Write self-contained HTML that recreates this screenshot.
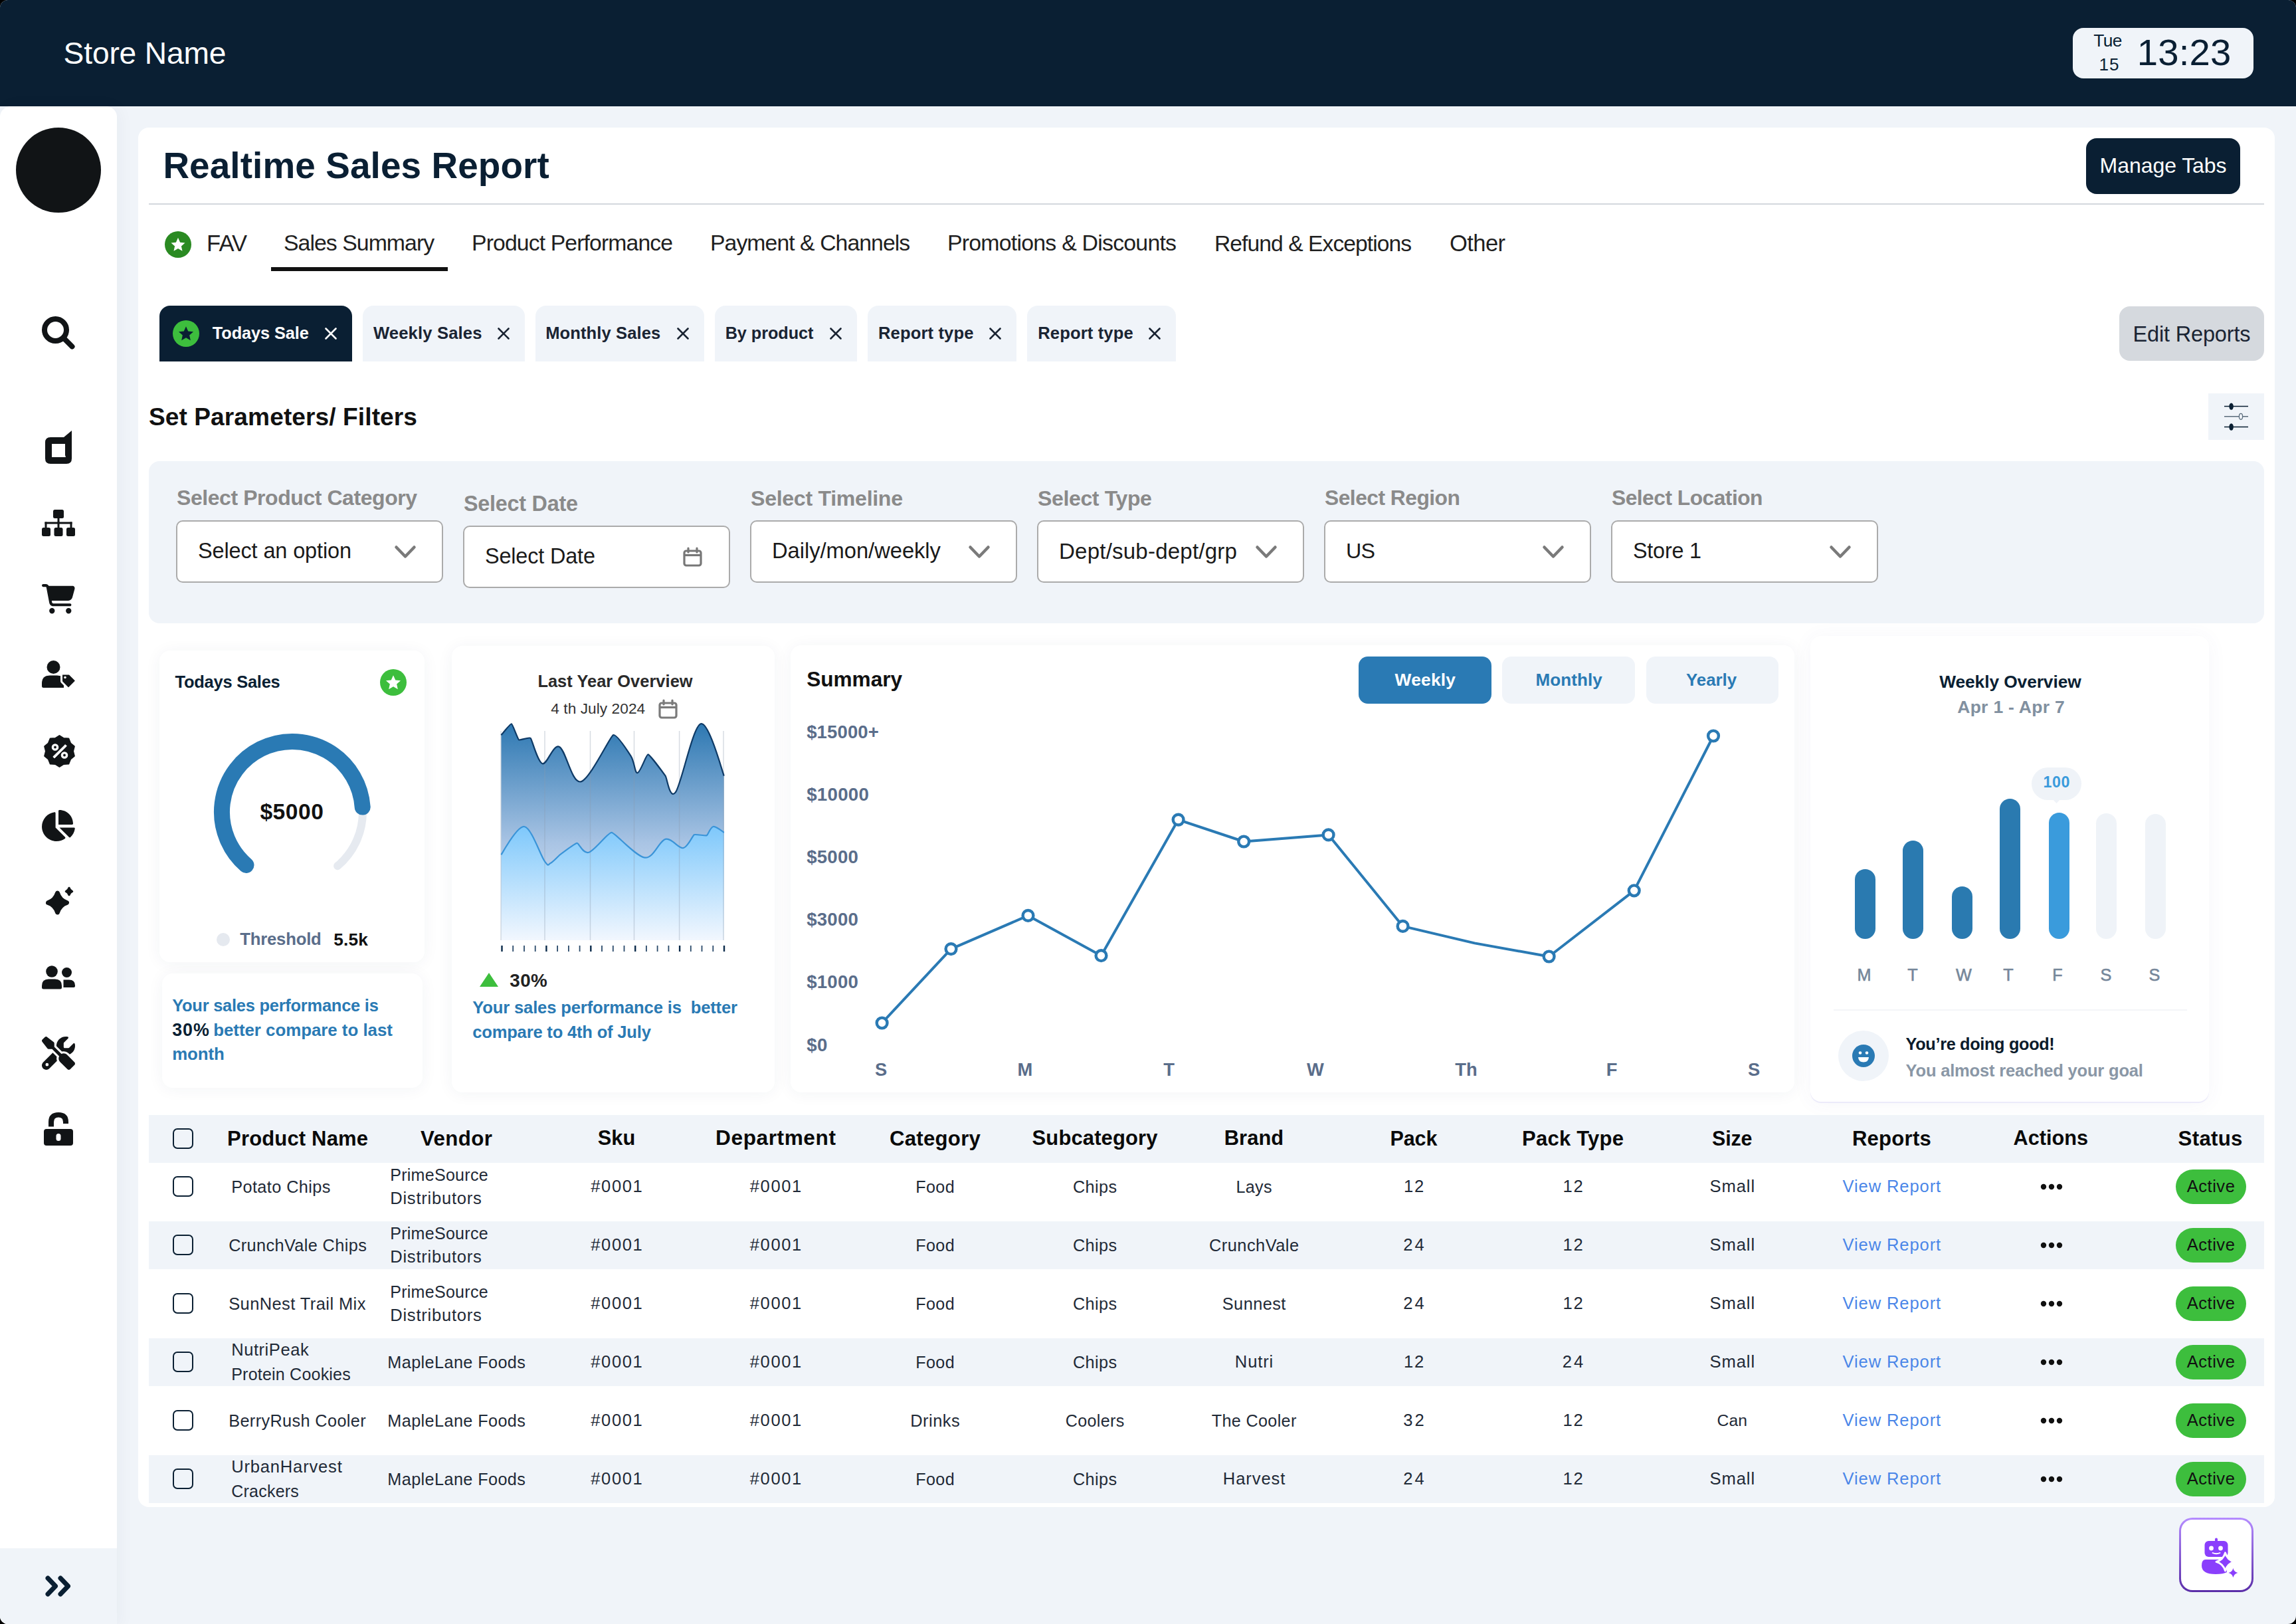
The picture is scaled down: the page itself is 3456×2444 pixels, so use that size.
<!DOCTYPE html><html><head><meta charset="utf-8"><style>
html,body{margin:0;padding:0;background:#000;}
#root{position:relative;width:3456px;height:2444px;overflow:hidden;border-radius:12px;background:#F0F4F9;font-family:"Liberation Sans",sans-serif;}
#root div.t{position:absolute;white-space:pre;line-height:1;}
</style></head><body><div id="root">
<div style="position:absolute;left:0px;top:0px;width:3456px;height:160px;background:#0A1F33;border-radius:0px;"></div>
<div class="t" style="top:56.9px;font-size:46.17px;font-weight:400;color:#FFFFFF;letter-spacing:-0.16px;left:95.6px;">Store Name</div>
<div style="position:absolute;left:3120px;top:42px;width:272px;height:76px;background:#F0F4F9;border-radius:16px;"></div>
<div class="t" style="top:48.4px;font-size:26.34px;font-weight:400;color:#0A1F33;letter-spacing:-0.59px;left:3151.2px;">Tue</div>
<div class="t" style="top:83.7px;font-size:26.10px;font-weight:400;color:#0A1F33;letter-spacing:0.79px;left:3159.6px;">15</div>
<div class="t" style="top:51.2px;font-size:56.26px;font-weight:400;color:#0A1F33;letter-spacing:0.15px;left:3216.8px;">13:23</div>
<div style="position:absolute;left:0px;top:160px;width:176px;height:2290px;background:#FFFFFF;border-radius:16px 16px 0 0;box-shadow:4px 0 24px rgba(20,40,80,0.04);"></div>
<div style="position:absolute;left:0px;top:2330px;width:176px;height:120px;background:#F0F4F9;border-radius:0px;"></div>
<div style="position:absolute;left:24px;top:192px;width:128px;height:128px;background:#111416;border-radius:64px;"></div>
<svg style="position:absolute;left:63px;top:476px;overflow:visible;" width="50" height="51" viewBox="0 0 50 51"><circle cx="20.5" cy="20.5" r="16.5" fill="none" stroke="#111416" stroke-width="8"/><line x1="33" y1="33" x2="45.5" y2="45.5" stroke="#111416" stroke-width="8" stroke-linecap="round"/></svg>
<svg style="position:absolute;left:68px;top:648px;overflow:visible;" width="40" height="50" viewBox="0 0 40 50"><path fill="#111416" fill-rule="evenodd" d="M8 10 H28 L40 0 V42 Q40 50 32 50 H8 Q0 50 0 42 V18 Q0 10 8 10 Z M10 20 V40 H31 L30 37 V20 Z"/></svg>
<svg style="position:absolute;left:63px;top:767px;overflow:visible;" width="50" height="40" viewBox="0 0 50 40"><g fill="#111416"><rect x="17" y="0" width="16" height="13" rx="2.5"/><rect x="23.5" y="12" width="3" height="9"/><rect x="4.5" y="18.5" width="41" height="3"/><rect x="4.5" y="18.5" width="3" height="9"/><rect x="23.5" y="18.5" width="3" height="9"/><rect x="42.5" y="18.5" width="3" height="9"/><rect x="0" y="27" width="13" height="13" rx="2.5"/><rect x="18.5" y="27" width="13" height="13" rx="2.5"/><rect x="37" y="27" width="13" height="13" rx="2.5"/></g></svg>
<svg style="position:absolute;left:63px;top:879px;overflow:visible;" width="50" height="44.4" viewBox="0 0 576 512"><path fill="#111416" d="M0 24C0 10.7 10.7 0 24 0H69.5c22 0 41.5 12.8 50.6 32h411c26.3 0 45.5 25 38.6 50.4l-41 152.3c-8.5 31.4-37 53.3-69.5 53.3H170.7l5.4 28.5c2.2 11.3 12.1 19.5 23.6 19.5H488c13.300 0 24 10.7 24 24s-10.7 24-24 24H199.7c-34.6 0-64.3-24.6-70.7-58.5L77.4 54.5c-.7-3.8-4-6.5-7.9-6.5H24C10.7 48 0 37.3 0 24zM128 464a48 48 0 1 1 96 0 48 48 0 1 1 -96 0zm336-48a48 48 0 1 1 0 96 48 48 0 1 1 0-96z"/></svg>
<svg style="position:absolute;left:63px;top:994px;overflow:visible;" width="50" height="41" viewBox="0 0 50 41"><g fill="#111416"><circle cx="17.5" cy="10" r="10"/><path d="M12 22.5 H23 Q33 22.5 33 32 V41 H2.5 Q0 41 0 38.5 V34.5 Q0 22.5 12 22.5 Z"/><path d="M30.5 20 H40.5 Q41.5 20 42.3 20.8 L50.5 29 Q52 30.5 50.5 32 L41.5 41 Q40 42.5 38.5 41 L30.3 32.8 Q29.5 32 29.5 31 V21 Q29.5 20 30.5 20 Z" stroke="#fff" stroke-width="3"/><circle cx="35" cy="25.5" r="1.8" fill="#fff"/></g></svg>
<svg style="position:absolute;left:65px;top:1105.5px;overflow:visible;" width="49" height="49" viewBox="0 0 49 49"><polygon fill="#111416" stroke="#111416" stroke-width="1.8" stroke-linejoin="round" points="24.50,0.90 30.87,4.91 38.37,5.41 41.17,12.39 46.94,17.21 45.10,24.50 46.94,31.79 41.17,36.61 38.37,43.59 30.87,44.09 24.50,48.10 18.13,44.09 10.63,43.59 7.83,36.61 2.06,31.79 3.90,24.50 2.06,17.21 7.83,12.39 10.63,5.41 18.13,4.91"/><g fill="none" stroke="#fff" stroke-width="3.4"><circle cx="18" cy="18.5" r="3.6"/><circle cx="32" cy="30.5" r="3.6"/></g><path d="M33.2 14.6 L35.4 16.8 L17 35 L14.8 32.8 Z" fill="#fff" stroke="#fff" stroke-width="1"/></svg>
<svg style="position:absolute;left:63px;top:1219px;overflow:visible;" width="50" height="47" viewBox="32 0 544 512"><path fill="#111416" d="M304 240V16.6c0-9 7-16.6 16-16.6C443.7 0 544 100.3 544 224c0 9-7.6 16-16.6 16H304zM32 272C32 150.7 122.1 50.3 239 34.3c9.2-1.3 17 6.1 17 15.4V288L412.5 444.5c6.7 6.7 6.2 17.7-1.5 23.1C371.8 495.6 323.8 512 272 512C139.5 512 32 404.6 32 272zm526.4 16c9.3 0 16.6 7.8 15.4 17c-7.7 55.9-34.6 105.6-73.9 142.3c-6 5.6-15.4 5.2-21.2-.7L320 288H558.4z"/></svg>
<svg style="position:absolute;left:67px;top:1335px;overflow:visible;" width="43" height="41" viewBox="0 0 43 41"><g fill="#111416" stroke="#111416" stroke-linejoin="round"><path d="M19.5 9 Q23 20 33.5 23.5 Q23 27 19.5 38 Q16 27 5.5 23.5 Q16 20 19.5 9 Z" stroke-width="7"/><path d="M37 1.5 Q38.3 5.2 41.5 6.5 Q38.3 7.8 37 11.5 Q35.7 7.8 32.5 6.5 Q35.7 5.2 37 1.5 Z" stroke-width="3.5"/></g></svg>
<svg style="position:absolute;left:63px;top:1453px;overflow:visible;" width="50" height="36" viewBox="0 0 50 36"><g fill="#111416"><circle cx="15" cy="9" r="8.8"/><path d="M10 20.5 H20 Q30 20.5 30 30.5 V33 Q30 35.5 27.5 35.5 H2.5 Q0 35.5 0 33 V30.5 Q0 20.5 10 20.5 Z"/><circle cx="37.5" cy="10.5" r="7.5"/><path d="M32.5 21.5 H41 Q50 21.5 50 30 V31 Q50 33 48 33 H32.5 Z"/></g></svg>
<svg style="position:absolute;left:63px;top:1560px;overflow:visible;" width="50" height="50" viewBox="0 0 512 512"><path fill="#111416" d="M78.6 5C69.1-2.4 55.6-1.5 47 7L7 47c-8.5 8.5-9.4 22-2.1 31.6l80 104c4.5 5.9 11.6 9.4 19 9.4h54.1l109 109c-14.7 29-10 65.4 14.3 89.6l112 112c12.5 12.5 32.8 12.5 45.3 0l64-64c12.5-12.5 12.5-32.8 0-45.3l-112-112c-24.2-24.2-60.6-29-89.6-14.3l-109-109V104c0-7.5-3.5-14.5-9.4-19L78.6 5zM19.9 396.1C7.2 408.8 0 426.1 0 444.1C0 481.6 30.4 512 67.9 512c18 0 35.3-7.2 48-19.9L233.7 374.3c-7.8-20.9-9-43.6-3.6-65.1l-61.7-61.7L19.9 396.1zM512 144c0-10.5-1.1-20.7-3.1-30.5c-2.4-11.2-16.1-14.1-24.2-6l-63.9 63.9c-3 3-7.1 4.7-11.3 4.7H352c-8.8 0-16-7.200-16-16V102.6c0-4.2 1.7-8.3 4.7-11.3l63.9-63.9c8.1-8.1 5.2-21.8-6-24.2C388.7 1.1 378.5 0 368 0C288.5 0 224 64.5 224 144l0 .8 85.3 85.3c36-9.1 75.8 .5 104 28.7L429 274.5c49-23 83-72.8 83-130.5zM56 432a24 24 0 1 1 48 0 24 24 0 1 1 -48 0z"/></svg>
<svg style="position:absolute;left:66px;top:1674px;overflow:visible;" width="44" height="50" viewBox="0 0 44 50"><g fill="#111416"><path d="M7 21.5 V14.5 Q7 0 22 0 Q37 0 37 14.5 V17 H29 V14.5 Q29 7.5 22 7.5 Q15 7.5 15 14.5 V21.5 Z"/><rect x="0" y="25" width="44" height="25" rx="4"/></g><rect x="18.5" y="32" width="7" height="11" rx="3.5" fill="#fff"/></svg>
<svg style="position:absolute;left:68px;top:2371px;overflow:visible;" width="40" height="32" viewBox="0 0 40 32"><g fill="none" stroke="#0A1F33" stroke-width="7" stroke-linecap="round" stroke-linejoin="round"><path d="M4 4 L15.5 16 L4 28"/><path d="M23 4 L34.5 16 L23 28"/></g></svg>
<div style="position:absolute;left:208px;top:192px;width:3216px;height:2076px;background:#FFFFFF;border-radius:16px;"></div>
<div class="t" style="top:222.1px;font-size:54.85px;font-weight:700;color:#0A1F33;letter-spacing:0.11px;left:245.4px;">Realtime Sales Report</div>
<div style="position:absolute;left:3140px;top:208px;width:232px;height:84px;background:#0A1F33;border-radius:16px;"></div>
<div class="t" style="top:233.3px;font-size:32.01px;font-weight:400;color:#FFFFFF;letter-spacing:-0.06px;left:3160.6px;">Manage Tabs</div>
<div style="position:absolute;left:224px;top:306px;width:3184px;height:2px;background:#D3D8DD;border-radius:0px;"></div>
<svg style="position:absolute;left:248px;top:348px;overflow:visible;" width="40" height="40" viewBox="0 0 40 40"><circle cx="20" cy="20" r="20" fill="#2A8A22"/><g transform="translate(20 20.8)"><path fill="#fff" d="M0 -11 L3.1 -4 L10.5 -3.4 L4.9 1.6 L6.5 9 L0 5.1 L-6.5 9 L-4.9 1.6 L-10.5 -3.4 L-3.1 -4 Z"/></g></svg>
<div class="t" style="top:348.7px;font-size:34.59px;font-weight:400;color:#1F1F1F;letter-spacing:-0.83px;left:311.0px;">FAV</div>
<div class="t" style="top:349.4px;font-size:33.82px;font-weight:400;color:#1F1F1F;letter-spacing:-0.96px;left:427.0px;">Sales Summary</div>
<div style="position:absolute;left:408px;top:402px;width:266px;height:6px;background:#111111;border-radius:0px;"></div>
<div class="t" style="top:349.4px;font-size:33.76px;font-weight:400;color:#1F1F1F;letter-spacing:-0.88px;left:710.0px;">Product Performance</div>
<div class="t" style="top:349.4px;font-size:33.75px;font-weight:400;color:#1F1F1F;letter-spacing:-0.93px;left:1069.0px;">Payment &amp; Channels</div>
<div class="t" style="top:349.3px;font-size:33.90px;font-weight:400;color:#1F1F1F;letter-spacing:-0.79px;left:1426.0px;">Promotions &amp; Discounts</div>
<div class="t" style="top:349.5px;font-size:33.62px;font-weight:400;color:#1F1F1F;letter-spacing:-0.93px;left:1828.0px;">Refund &amp; Exceptions</div>
<div class="t" style="top:348.7px;font-size:34.57px;font-weight:400;color:#1F1F1F;letter-spacing:-0.58px;left:2182.0px;">Other</div>
<div style="position:absolute;left:240px;top:460px;width:290px;height:84px;background:#0A1F33;border-radius:16px 16px 0 0;"></div>
<svg style="position:absolute;left:260px;top:482px;overflow:visible;" width="40" height="40" viewBox="0 0 40 40"><circle cx="20" cy="20" r="20" fill="#3DBE3D"/><g transform="translate(20 20.8) scale(1.05)"><path fill="#0A1F33" d="M0 -11 L3.1 -4 L10.5 -3.4 L4.9 1.6 L6.5 9 L0 5.1 L-6.5 9 L-4.9 1.6 L-10.5 -3.4 L-3.1 -4 Z"/></g></svg>
<div class="t" style="top:488.9px;font-size:25.29px;font-weight:700;color:#FFFFFF;letter-spacing:-0.07px;left:319.8px;">Todays Sale</div>
<svg style="position:absolute;left:489px;top:493px;overflow:visible;" width="18" height="18" viewBox="0 0 18 18"><path d="M1.5 1.5 L16.5 16.5 M16.5 1.5 L1.5 16.5" stroke="#FFFFFF" stroke-width="2.6" stroke-linecap="round"/></svg>
<div style="position:absolute;left:546px;top:460px;width:244px;height:84px;background:#F0F4F9;border-radius:16px 16px 0 0;"></div>
<div class="t" style="top:488.6px;font-size:25.65px;font-weight:700;color:#1A2433;letter-spacing:0.14px;left:561.9px;">Weekly Sales</div>
<svg style="position:absolute;left:749px;top:493px;overflow:visible;" width="18" height="18" viewBox="0 0 18 18"><path d="M1.5 1.5 L16.5 16.5 M16.5 1.5 L1.5 16.5" stroke="#1A2433" stroke-width="2.6" stroke-linecap="round"/></svg>
<div style="position:absolute;left:806px;top:460px;width:254px;height:84px;background:#F0F4F9;border-radius:16px 16px 0 0;"></div>
<div class="t" style="top:488.7px;font-size:25.58px;font-weight:700;color:#1A2433;letter-spacing:0.09px;left:821.2px;">Monthly Sales</div>
<svg style="position:absolute;left:1019px;top:493px;overflow:visible;" width="18" height="18" viewBox="0 0 18 18"><path d="M1.5 1.5 L16.5 16.5 M16.5 1.5 L1.5 16.5" stroke="#1A2433" stroke-width="2.6" stroke-linecap="round"/></svg>
<div style="position:absolute;left:1076px;top:460px;width:214px;height:84px;background:#F0F4F9;border-radius:16px 16px 0 0;"></div>
<div class="t" style="top:488.9px;font-size:25.29px;font-weight:700;color:#1A2433;letter-spacing:-0.07px;left:1091.7px;">By product</div>
<svg style="position:absolute;left:1249px;top:493px;overflow:visible;" width="18" height="18" viewBox="0 0 18 18"><path d="M1.5 1.5 L16.5 16.5 M16.5 1.5 L1.5 16.5" stroke="#1A2433" stroke-width="2.6" stroke-linecap="round"/></svg>
<div style="position:absolute;left:1306px;top:460px;width:224px;height:84px;background:#F0F4F9;border-radius:16px 16px 0 0;"></div>
<div class="t" style="top:488.6px;font-size:25.62px;font-weight:700;color:#1A2433;letter-spacing:0.12px;left:1322.0px;">Report type</div>
<svg style="position:absolute;left:1489px;top:493px;overflow:visible;" width="18" height="18" viewBox="0 0 18 18"><path d="M1.5 1.5 L16.5 16.5 M16.5 1.5 L1.5 16.5" stroke="#1A2433" stroke-width="2.6" stroke-linecap="round"/></svg>
<div style="position:absolute;left:1546px;top:460px;width:224px;height:84px;background:#F0F4F9;border-radius:16px 16px 0 0;"></div>
<div class="t" style="top:488.6px;font-size:25.62px;font-weight:700;color:#1A2433;letter-spacing:0.12px;left:1562.2px;">Report type</div>
<svg style="position:absolute;left:1729px;top:493px;overflow:visible;" width="18" height="18" viewBox="0 0 18 18"><path d="M1.5 1.5 L16.5 16.5 M16.5 1.5 L1.5 16.5" stroke="#1A2433" stroke-width="2.6" stroke-linecap="round"/></svg>
<div style="position:absolute;left:3190px;top:461px;width:218px;height:82px;background:#D5D9DE;border-radius:16px;"></div>
<div class="t" style="top:486.5px;font-size:32.48px;font-weight:400;color:#1A2433;letter-spacing:-0.15px;left:3210.5px;">Edit Reports</div>
<div class="t" style="top:608.6px;font-size:37.10px;font-weight:700;color:#111111;letter-spacing:0.10px;left:223.9px;">Set Parameters/ Filters</div>
<div style="position:absolute;left:3324px;top:592px;width:84px;height:70px;background:#F0F4F9;border-radius:0px;"></div>
<svg style="position:absolute;left:3347px;top:603px;overflow:visible;" width="40" height="46" viewBox="0 0 40 46"><g stroke="#0A1F33" stroke-width="1.5"><line x1="1" y1="8.6" x2="37" y2="8.6"/><line x1="1" y1="23.8" x2="37" y2="23.8" stroke="#5A6B7B"/><line x1="1" y1="39.5" x2="37" y2="39.5"/></g><ellipse cx="11.6" cy="8.6" rx="3.3" ry="5.2" fill="#0A1F33"/><ellipse cx="26" cy="23.8" rx="2.6" ry="4.5" fill="#F0F4F9" stroke="#5A6B7B" stroke-width="1.3"/><ellipse cx="11.6" cy="39.5" rx="3.3" ry="5.2" fill="#0A1F33"/></svg>
<div style="position:absolute;left:224px;top:694px;width:3184px;height:244px;background:#F0F4F9;border-radius:16px;"></div>
<div class="t" style="top:733.9px;font-size:31.97px;font-weight:700;color:#8A8A8A;letter-spacing:-0.42px;left:266.0px;">Select Product Category</div>
<div style="position:absolute;left:265px;top:783px;width:398px;height:90px;border:2px solid #ABABAB;border-radius:10px;background:#fff"></div>
<div class="t" style="top:813.1px;font-size:32.50px;font-weight:400;color:#1A1A1A;letter-spacing:-0.14px;left:298.0px;">Select an option</div>
<svg style="position:absolute;left:594px;top:821px;overflow:visible;" width="32" height="20" viewBox="0 0 32 20"><path d="M2.5 2.5 L16 16.5 L29.5 2.5" fill="none" stroke="#7A7A7A" stroke-width="4.5" stroke-linecap="round" stroke-linejoin="round"/></svg>
<div class="t" style="top:741.6px;font-size:32.34px;font-weight:700;color:#8A8A8A;letter-spacing:-0.24px;left:698.0px;">Select Date</div>
<div style="position:absolute;left:697px;top:791px;width:398px;height:90px;border:2px solid #ABABAB;border-radius:10px;background:#fff"></div>
<div class="t" style="top:821.1px;font-size:32.45px;font-weight:400;color:#1A1A1A;letter-spacing:-0.17px;left:730.0px;">Select Date</div>
<svg style="position:absolute;left:1028px;top:824px;overflow:visible;" width="29" height="29" viewBox="0 0 29 29"><g fill="none" stroke="#777" stroke-width="3.2"><rect x="2" y="5" width="25" height="22" rx="3"/><line x1="2" y1="11.5" x2="27" y2="11.5"/><line x1="8" y1="1" x2="8" y2="7" stroke-linecap="round"/><line x1="21" y1="1" x2="21" y2="7" stroke-linecap="round"/></g></svg>
<div class="t" style="top:733.8px;font-size:32.16px;font-weight:700;color:#8A8A8A;letter-spacing:-0.32px;left:1130.0px;">Select Timeline</div>
<div style="position:absolute;left:1129px;top:783px;width:398px;height:90px;border:2px solid #ABABAB;border-radius:10px;background:#fff"></div>
<div class="t" style="top:812.9px;font-size:32.72px;font-weight:400;color:#1A1A1A;letter-spacing:-0.04px;left:1162.0px;">Daily/mon/weekly</div>
<svg style="position:absolute;left:1458px;top:821px;overflow:visible;" width="32" height="20" viewBox="0 0 32 20"><path d="M2.5 2.5 L16 16.5 L29.5 2.5" fill="none" stroke="#7A7A7A" stroke-width="4.5" stroke-linecap="round" stroke-linejoin="round"/></svg>
<div class="t" style="top:733.9px;font-size:32.07px;font-weight:700;color:#8A8A8A;letter-spacing:-0.39px;left:1562.0px;">Select Type</div>
<div style="position:absolute;left:1561px;top:783px;width:398px;height:90px;border:2px solid #ABABAB;border-radius:10px;background:#fff"></div>
<div class="t" style="top:812.6px;font-size:33.14px;font-weight:400;color:#1A1A1A;letter-spacing:0.17px;left:1594.0px;">Dept/sub-dept/grp</div>
<svg style="position:absolute;left:1890px;top:821px;overflow:visible;" width="32" height="20" viewBox="0 0 32 20"><path d="M2.5 2.5 L16 16.5 L29.5 2.5" fill="none" stroke="#7A7A7A" stroke-width="4.5" stroke-linecap="round" stroke-linejoin="round"/></svg>
<div class="t" style="top:734.1px;font-size:31.81px;font-weight:700;color:#8A8A8A;letter-spacing:-0.53px;left:1994.0px;">Select Region</div>
<div style="position:absolute;left:1993px;top:783px;width:398px;height:90px;border:2px solid #ABABAB;border-radius:10px;background:#fff"></div>
<div class="t" style="top:813.3px;font-size:32.22px;font-weight:400;color:#1A1A1A;letter-spacing:-0.78px;left:2026.0px;">US</div>
<svg style="position:absolute;left:2322px;top:821px;overflow:visible;" width="32" height="20" viewBox="0 0 32 20"><path d="M2.5 2.5 L16 16.5 L29.5 2.5" fill="none" stroke="#7A7A7A" stroke-width="4.5" stroke-linecap="round" stroke-linejoin="round"/></svg>
<div class="t" style="top:734.1px;font-size:31.77px;font-weight:700;color:#8A8A8A;letter-spacing:-0.52px;left:2426.0px;">Select Location</div>
<div style="position:absolute;left:2425px;top:783px;width:398px;height:90px;border:2px solid #ABABAB;border-radius:10px;background:#fff"></div>
<div class="t" style="top:813.2px;font-size:32.36px;font-weight:400;color:#1A1A1A;letter-spacing:-0.23px;left:2458.0px;">Store 1</div>
<svg style="position:absolute;left:2754px;top:821px;overflow:visible;" width="32" height="20" viewBox="0 0 32 20"><path d="M2.5 2.5 L16 16.5 L29.5 2.5" fill="none" stroke="#7A7A7A" stroke-width="4.5" stroke-linecap="round" stroke-linejoin="round"/></svg>
<div style="position:absolute;left:240px;top:979px;width:399px;height:469px;background:#FFFFFF;border-radius:16px;box-shadow:0 2px 24px rgba(30,50,90,0.055);"></div>
<div class="t" style="top:1014.4px;font-size:25.49px;font-weight:700;color:#0A1F33;letter-spacing:-0.26px;left:263.6px;">Todays Sales</div>
<svg style="position:absolute;left:572px;top:1007px;overflow:visible;" width="40" height="40" viewBox="0 0 40 40"><circle cx="20" cy="20" r="20" fill="#3DBE3D"/><g transform="translate(20 20.8) scale(1.05)"><path fill="#fff" d="M0 -11 L3.1 -4 L10.5 -3.4 L4.9 1.6 L6.5 9 L0 5.1 L-6.5 9 L-4.9 1.6 L-10.5 -3.4 L-3.1 -4 Z"/></g></svg>
<svg style="position:absolute;left:310px;top:1092px;overflow:visible;" width="260" height="260" viewBox="0 0 260 260"><g transform="translate(130 130)"><path d="M105.7 -7.4 A106 106 0 0 1 68.1 81.2" fill="none" stroke="#E6EAF0" stroke-width="12" stroke-linecap="round"/><path d="M-69.5 80.0 A106 106 0 1 1 105.7 -7.4" fill="none" stroke="#2A7AB4" stroke-width="24" stroke-linecap="round"/></g></svg>
<div class="t" style="top:1204.6px;font-size:33.57px;font-weight:700;color:#111111;letter-spacing:0.56px;left:391.4px;">$5000</div>
<div style="position:absolute;left:326px;top:1404px;width:20px;height:20px;background:#E5E9EF;border-radius:10px;"></div>
<div class="t" style="top:1401.3px;font-size:25.67px;font-weight:700;color:#5A6D8A;letter-spacing:-0.18px;left:361.2px;">Threshold</div>
<div class="t" style="top:1400.8px;font-size:26.23px;font-weight:700;color:#111111;letter-spacing:0.18px;left:502.2px;">5.5k</div>
<div style="position:absolute;left:244px;top:1465px;width:392px;height:172px;background:#FFFFFF;border-radius:16px;box-shadow:0 2px 24px rgba(30,50,90,0.055);"></div>
<div class="t" style="top:1501.4px;font-size:25.48px;font-weight:700;color:#2A7AB4;letter-spacing:-0.25px;left:259.2px;">Your sales performance is</div>
<div class="t" style="top:1537.3px;font-size:26.85px;font-weight:700;color:#0A1F33;letter-spacing:0.92px;left:259.2px;">30%</div>
<div class="t" style="top:1538.1px;font-size:25.89px;font-weight:700;color:#2A7AB4;letter-spacing:-0.03px;left:321.2px;">better compare to last</div>
<div class="t" style="top:1574.1px;font-size:25.85px;font-weight:700;color:#2A7AB4;letter-spacing:-0.08px;left:259.2px;">month</div>
<div style="position:absolute;left:680px;top:972px;width:486px;height:672px;background:#FFFFFF;border-radius:16px;box-shadow:0 2px 24px rgba(30,50,90,0.055);"></div>
<div class="t" style="top:1012.5px;font-size:25.38px;font-weight:700;color:#2A2A2A;letter-spacing:0.05px;left:809.4px;">Last Year Overview</div>
<div class="t" style="top:1054.8px;font-size:22.67px;font-weight:400;color:#333333;letter-spacing:0.06px;left:829.3px;">4 th July 2024</div>
<svg style="position:absolute;left:991px;top:1053px;overflow:visible;" width="29" height="29" viewBox="0 0 29 29"><g fill="none" stroke="#7A7A7A" stroke-width="3.2"><rect x="2" y="5" width="25" height="22" rx="3"/><line x1="2" y1="11.5" x2="27" y2="11.5"/><line x1="8" y1="1" x2="8" y2="7" stroke-linecap="round"/><line x1="21" y1="1" x2="21" y2="7" stroke-linecap="round"/></g></svg>
<svg style="position:absolute;left:740px;top:1080px;overflow:visible;" width="360" height="360" viewBox="0 0 360 360"><defs><linearGradient id="gd" x1="0" y1="0" x2="0" y2="1"><stop offset="0" stop-color="#2D78B2"/><stop offset="0.55" stop-color="#A9C4E4"/><stop offset="1" stop-color="#EEF3FB"/></linearGradient>
<linearGradient id="gl" x1="0" y1="0" x2="0" y2="1"><stop offset="0" stop-color="#7EC8FB"/><stop offset="1" stop-color="#F2F7FE"/></linearGradient></defs>
<path d="M14.4 26.2 C17.0 23.4 28.3 8.9 29.9 9.3 C31.6 9.8 39.2 31.9 41.0 33.3 C42.8 34.6 56.5 28.8 58.7 31.0 C61.0 33.3 69.3 67.0 76.5 69.2 C83.7 71.3 92.4 39.3 102.0 43.9 C111.6 48.4 120.6 99.4 134.1 96.4 C147.6 93.5 178.2 28.6 182.9 26.2 C187.6 23.7 203.4 48.1 209.5 57.6 C215.6 67.1 215.1 83.5 219.5 83.1 C223.8 82.8 232.8 55.1 235.4 55.4 C238.1 55.7 259.0 84.0 261.6 87.6 C264.2 91.1 268.2 125.0 277.1 111.9 C286.0 98.9 302.7 13.4 314.8 9.3 C326.9 5.2 347.6 82.7 349.8 87.6 L349.8 335 L14.4 335 Z" fill="url(#gd)"/>
<path d="M14.4 206.2 C16.6 203.5 38.3 162.4 49.2 164.0 C60.1 165.7 73.2 207.0 79.8 216.1 C86.4 225.3 84.8 220.7 88.7 219.0 C92.6 217.4 100.6 208.0 103.1 206.2 C105.6 204.3 125.9 189.1 128.6 188.9 C131.3 188.7 137.6 205.5 146.3 202.8 C155.0 200.2 175.4 172.4 180.7 172.9 C185.9 173.4 217.1 208.9 230.5 210.6 C244.0 212.3 252.0 185.3 261.6 182.9 C271.2 180.5 281.0 197.3 288.2 196.2 C295.4 195.1 302.6 177.4 304.8 176.2 C307.0 175.1 321.9 178.1 323.7 177.3 C325.5 176.6 329.3 164.8 333.6 164.0 C338.0 163.3 348.8 172.4 349.8 172.9 L349.8 335 L14.4 335 Z" fill="url(#gl)"/>
<line x1="14.0" y1="20" x2="14.0" y2="335" stroke="#8C9AAB" stroke-opacity="0.35" stroke-width="1.5"/><line x1="80.0" y1="20" x2="80.0" y2="335" stroke="#8C9AAB" stroke-opacity="0.35" stroke-width="1.5"/><line x1="148.5" y1="20" x2="148.5" y2="335" stroke="#8C9AAB" stroke-opacity="0.35" stroke-width="1.5"/><line x1="214.5" y1="20" x2="214.5" y2="335" stroke="#8C9AAB" stroke-opacity="0.35" stroke-width="1.5"/><line x1="282.6" y1="20" x2="282.6" y2="335" stroke="#8C9AAB" stroke-opacity="0.35" stroke-width="1.5"/><line x1="349.0" y1="20" x2="349.0" y2="335" stroke="#8C9AAB" stroke-opacity="0.35" stroke-width="1.5"/>
<path d="M14.4 26.2 C17.0 23.4 28.3 8.9 29.9 9.3 C31.6 9.8 39.2 31.9 41.0 33.3 C42.8 34.6 56.5 28.8 58.7 31.0 C61.0 33.3 69.3 67.0 76.5 69.2 C83.7 71.3 92.4 39.3 102.0 43.9 C111.6 48.4 120.6 99.4 134.1 96.4 C147.6 93.5 178.2 28.6 182.9 26.2 C187.6 23.7 203.4 48.1 209.5 57.6 C215.6 67.1 215.1 83.5 219.5 83.1 C223.8 82.8 232.8 55.1 235.4 55.4 C238.1 55.7 259.0 84.0 261.6 87.6 C264.2 91.1 268.2 125.0 277.1 111.9 C286.0 98.9 302.7 13.4 314.8 9.3 C326.9 5.2 347.6 82.7 349.8 87.6" fill="none" stroke="#0E3A66" stroke-width="2.2"/>
<path d="M14.4 206.2 C16.6 203.5 38.3 162.4 49.2 164.0 C60.1 165.7 73.2 207.0 79.8 216.1 C86.4 225.3 84.8 220.7 88.7 219.0 C92.6 217.4 100.6 208.0 103.1 206.2 C105.6 204.3 125.9 189.1 128.6 188.9 C131.3 188.7 137.6 205.5 146.3 202.8 C155.0 200.2 175.4 172.4 180.7 172.9 C185.9 173.4 217.1 208.9 230.5 210.6 C244.0 212.3 252.0 185.3 261.6 182.9 C271.2 180.5 281.0 197.3 288.2 196.2 C295.4 195.1 302.6 177.4 304.8 176.2 C307.0 175.1 321.9 178.1 323.7 177.3 C325.5 176.6 329.3 164.8 333.6 164.0 C338.0 163.3 348.8 172.4 349.8 172.9" fill="none" stroke="#3A94D8" stroke-width="2.2"/>
<line x1="15.5" y1="343" x2="15.5" y2="352" stroke="#0A2A4A" stroke-width="2.4"/><line x1="32.2" y1="343" x2="32.2" y2="352" stroke="#2A4A6A" stroke-width="1.8"/><line x1="49.0" y1="343" x2="49.0" y2="352" stroke="#2A4A6A" stroke-width="1.8"/><line x1="65.7" y1="343" x2="65.7" y2="352" stroke="#2A4A6A" stroke-width="1.8"/><line x1="82.4" y1="343" x2="82.4" y2="352" stroke="#0A2A4A" stroke-width="2.4"/><line x1="99.1" y1="343" x2="99.1" y2="352" stroke="#2A4A6A" stroke-width="1.8"/><line x1="115.9" y1="343" x2="115.9" y2="352" stroke="#2A4A6A" stroke-width="1.8"/><line x1="132.6" y1="343" x2="132.6" y2="352" stroke="#2A4A6A" stroke-width="1.8"/><line x1="149.3" y1="343" x2="149.3" y2="352" stroke="#0A2A4A" stroke-width="2.4"/><line x1="166.0" y1="343" x2="166.0" y2="352" stroke="#2A4A6A" stroke-width="1.8"/><line x1="182.8" y1="343" x2="182.8" y2="352" stroke="#2A4A6A" stroke-width="1.8"/><line x1="199.5" y1="343" x2="199.5" y2="352" stroke="#2A4A6A" stroke-width="1.8"/><line x1="216.2" y1="343" x2="216.2" y2="352" stroke="#0A2A4A" stroke-width="2.4"/><line x1="232.9" y1="343" x2="232.9" y2="352" stroke="#2A4A6A" stroke-width="1.8"/><line x1="249.6" y1="343" x2="249.6" y2="352" stroke="#2A4A6A" stroke-width="1.8"/><line x1="266.4" y1="343" x2="266.4" y2="352" stroke="#2A4A6A" stroke-width="1.8"/><line x1="283.1" y1="343" x2="283.1" y2="352" stroke="#0A2A4A" stroke-width="2.4"/><line x1="299.8" y1="343" x2="299.8" y2="352" stroke="#2A4A6A" stroke-width="1.8"/><line x1="316.5" y1="343" x2="316.5" y2="352" stroke="#2A4A6A" stroke-width="1.8"/><line x1="333.3" y1="343" x2="333.3" y2="352" stroke="#2A4A6A" stroke-width="1.8"/><line x1="350.0" y1="343" x2="350.0" y2="352" stroke="#0A2A4A" stroke-width="2.4"/></svg>
<svg style="position:absolute;left:722px;top:1464px;overflow:visible;" width="28" height="21" viewBox="0 0 28 21"><path d="M14 0 L28 21 H0 Z" fill="#3DBE3D"/></svg>
<div class="t" style="top:1461.5px;font-size:27.81px;font-weight:700;color:#222222;letter-spacing:0.50px;left:767.2px;">30%</div>
<div class="t" style="top:1504.3px;font-size:25.63px;font-weight:700;color:#2A7AB4;letter-spacing:-0.16px;left:711.2px;">Your sales performance is  better</div>
<div class="t" style="top:1541.4px;font-size:25.57px;font-weight:700;color:#2A7AB4;letter-spacing:-0.19px;left:711.2px;">compare to 4th of July</div>
<div style="position:absolute;left:1190px;top:971px;width:1511px;height:673px;background:#FFFFFF;border-radius:16px;box-shadow:0 2px 24px rgba(30,50,90,0.055);"></div>
<div class="t" style="top:1007.4px;font-size:31.62px;font-weight:700;color:#111111;letter-spacing:-0.06px;left:1214.3px;">Summary</div>
<div style="position:absolute;left:2045px;top:988px;width:200px;height:71px;background:#2A7AB4;border-radius:14px;"></div>
<div style="position:absolute;left:2261px;top:988px;width:200px;height:71px;background:#F0F4F9;border-radius:14px;"></div>
<div style="position:absolute;left:2478px;top:988px;width:199px;height:71px;background:#F0F4F9;border-radius:14px;"></div>
<div class="t" style="top:1010.1px;font-size:26.30px;font-weight:700;color:#FFFFFF;letter-spacing:0.24px;left:2099.6px;">Weekly</div>
<div class="t" style="top:1010.4px;font-size:26.04px;font-weight:700;color:#2A7AB4;letter-spacing:0.05px;left:2311.6px;">Monthly</div>
<div class="t" style="top:1010.5px;font-size:25.88px;font-weight:700;color:#2A7AB4;letter-spacing:-0.05px;left:2538.1px;">Yearly</div>
<div class="t" style="top:1087.7px;font-size:27.52px;font-weight:700;color:#5A6D8A;letter-spacing:0.13px;left:1214.2px;">$15000+</div>
<div class="t" style="top:1181.6px;font-size:27.70px;font-weight:700;color:#5A6D8A;letter-spacing:0.25px;left:1214.2px;">$10000</div>
<div class="t" style="top:1275.6px;font-size:27.63px;font-weight:700;color:#5A6D8A;letter-spacing:0.21px;left:1214.2px;">$5000</div>
<div class="t" style="top:1369.6px;font-size:27.63px;font-weight:700;color:#5A6D8A;letter-spacing:0.21px;left:1214.2px;">$3000</div>
<div class="t" style="top:1463.6px;font-size:27.63px;font-weight:700;color:#5A6D8A;letter-spacing:0.21px;left:1214.2px;">$1000</div>
<div class="t" style="top:1558.6px;font-size:27.66px;font-weight:700;color:#5A6D8A;letter-spacing:0.38px;left:1214.2px;">$0</div>
<div class="t" style="top:1595.9px;font-size:27.33px;font-weight:700;color:#5A6D8A;left:1316.9px;">S</div>
<div class="t" style="top:1595.9px;font-size:27.33px;font-weight:700;color:#5A6D8A;left:1531.6px;">M</div>
<div class="t" style="top:1595.9px;font-size:27.33px;font-weight:700;color:#5A6D8A;left:1751.2px;">T</div>
<div class="t" style="top:1595.9px;font-size:27.33px;font-weight:700;color:#5A6D8A;left:1967.1px;">W</div>
<div class="t" style="top:1595.9px;font-size:27.33px;font-weight:700;color:#5A6D8A;left:2190.3px;">Th</div>
<div class="t" style="top:1595.9px;font-size:27.33px;font-weight:700;color:#5A6D8A;left:2417.7px;">F</div>
<div class="t" style="top:1595.9px;font-size:27.33px;font-weight:700;color:#5A6D8A;left:2630.9px;">S</div>
<svg style="position:absolute;left:1300px;top:1080px;overflow:visible;" width="1320" height="480" viewBox="0 0 1320 480"><polyline points="27.6,459.5 131.5,348.1 247.5,297.9 357.5,358.2 473.6,153.6 572.2,186.5 699.6,176.4 811.6,313.9 919.6,339.4 1031.6,359.5 1159.7,260.3 1279.0,27.5" fill="none" stroke="#2A7AB4" stroke-width="4" stroke-linejoin="round"/><circle cx="27.6" cy="459.5" r="7.9" fill="#fff" stroke="#2A7AB4" stroke-width="4.4"/><circle cx="131.5" cy="348.1" r="7.9" fill="#fff" stroke="#2A7AB4" stroke-width="4.4"/><circle cx="247.5" cy="297.9" r="7.9" fill="#fff" stroke="#2A7AB4" stroke-width="4.4"/><circle cx="357.5" cy="358.2" r="7.9" fill="#fff" stroke="#2A7AB4" stroke-width="4.4"/><circle cx="473.6" cy="153.6" r="7.9" fill="#fff" stroke="#2A7AB4" stroke-width="4.4"/><circle cx="572.2" cy="186.5" r="7.9" fill="#fff" stroke="#2A7AB4" stroke-width="4.4"/><circle cx="699.6" cy="176.4" r="7.9" fill="#fff" stroke="#2A7AB4" stroke-width="4.4"/><circle cx="811.6" cy="313.9" r="7.9" fill="#fff" stroke="#2A7AB4" stroke-width="4.4"/><circle cx="1031.6" cy="359.5" r="7.9" fill="#fff" stroke="#2A7AB4" stroke-width="4.4"/><circle cx="1159.7" cy="260.3" r="7.9" fill="#fff" stroke="#2A7AB4" stroke-width="4.4"/><circle cx="1279.0" cy="27.5" r="7.9" fill="#fff" stroke="#2A7AB4" stroke-width="4.4"/></svg>
<div style="position:absolute;left:2725px;top:957px;width:600px;height:701px;background:#FFFFFF;border-radius:16px;box-shadow:0 2px 0 #ECEBFA, 0 2px 30px rgba(80,70,160,0.05);"></div>
<div class="t" style="top:1013.1px;font-size:26.35px;font-weight:700;color:#0A1F33;letter-spacing:-0.09px;left:2919.2px;">Weekly Overview</div>
<div class="t" style="top:1050.5px;font-size:26.53px;font-weight:700;color:#8190A0;letter-spacing:0.29px;left:2946.2px;">Apr 1 - Apr 7</div>
<div style="position:absolute;left:2791.8px;top:1308px;width:31px;height:105px;background:#2A7AB0;border-radius:15.5px;"></div>
<div style="position:absolute;left:2864.1px;top:1265px;width:31px;height:148px;background:#2A7AB0;border-radius:15.5px;"></div>
<div style="position:absolute;left:2937.7px;top:1334px;width:31px;height:79px;background:#2A7AB0;border-radius:15.5px;"></div>
<div style="position:absolute;left:3009.9px;top:1202px;width:31px;height:211px;background:#2A7AB0;border-radius:15.5px;"></div>
<div style="position:absolute;left:3083.5px;top:1223px;width:31px;height:190px;background:#3A9BDC;border-radius:15.5px;"></div>
<div style="position:absolute;left:3155.3px;top:1224px;width:31px;height:189px;background:#EFF3F8;border-radius:15.5px;"></div>
<div style="position:absolute;left:3228.5px;top:1225px;width:31px;height:188px;background:#EFF3F8;border-radius:15.5px;"></div>
<div style="position:absolute;left:3058px;top:1155px;width:75px;height:49px;background:#EFF3F8;border-radius:24.5px;"></div>
<svg style="position:absolute;left:3089px;top:1202px;overflow:visible;" width="13" height="8" viewBox="0 0 13 8"><path d="M0 0 H13 L6.5 7 Z" fill="#EFF3F8"/></svg>
<div class="t" style="top:1166.4px;font-size:23.21px;font-weight:700;color:#3A9BDC;letter-spacing:0.57px;left:3075.6px;">100</div>
<div class="t" style="top:1455.1px;font-size:25.28px;font-weight:400;color:#76879A;left:2795.5px;-webkit-text-stroke:0.6px #76879A;">M</div>
<div class="t" style="top:1455.1px;font-size:25.28px;font-weight:400;color:#76879A;left:2871.3px;-webkit-text-stroke:0.6px #76879A;">T</div>
<div class="t" style="top:1455.1px;font-size:25.28px;font-weight:400;color:#76879A;left:2944.1px;-webkit-text-stroke:0.6px #76879A;">W</div>
<div class="t" style="top:1455.1px;font-size:25.28px;font-weight:400;color:#76879A;left:3015.3px;-webkit-text-stroke:0.6px #76879A;">T</div>
<div class="t" style="top:1455.1px;font-size:25.28px;font-weight:400;color:#76879A;left:3089.3px;-webkit-text-stroke:0.6px #76879A;">F</div>
<div class="t" style="top:1455.1px;font-size:25.28px;font-weight:400;color:#76879A;left:3161.6px;-webkit-text-stroke:0.6px #76879A;">S</div>
<div class="t" style="top:1455.1px;font-size:25.28px;font-weight:400;color:#76879A;left:3234.6px;-webkit-text-stroke:0.6px #76879A;">S</div>
<div style="position:absolute;left:2760px;top:1519px;width:532px;height:2px;background:#F4F5F8;border-radius:0px;"></div>
<div style="position:absolute;left:2766.6px;top:1550.7px;width:76px;height:76px;background:#F0F4F9;border-radius:38px;"></div>
<svg style="position:absolute;left:2787.6px;top:1571.7px;overflow:visible;" width="34" height="34" viewBox="0 0 34 34"><circle cx="17" cy="17" r="17" fill="#2A7AB4"/><circle cx="12" cy="12.5" r="2.3" fill="#fff"/><circle cx="22" cy="12.5" r="2.3" fill="#fff"/><path d="M9 19 H25 Q24.5 26.5 17 26.5 Q9.5 26.5 9 19 Z" fill="#fff"/></svg>
<div class="t" style="top:1559.3px;font-size:25.31px;font-weight:700;color:#0B1B2B;letter-spacing:-0.34px;left:2868.6px;">You’re doing good!</div>
<div class="t" style="top:1599.0px;font-size:25.56px;font-weight:700;color:#8A97A6;letter-spacing:-0.21px;left:2868.6px;">You almost reached your goal</div>
<div style="position:absolute;left:224px;top:1678px;width:3184px;height:72px;background:#F0F4F9;border-radius:0px;"></div>
<div style="position:absolute;left:224px;top:1838px;width:3184px;height:72px;background:#F0F4F9;border-radius:0px;"></div>
<div style="position:absolute;left:224px;top:2014px;width:3184px;height:72px;background:#F0F4F9;border-radius:0px;"></div>
<div style="position:absolute;left:224px;top:2190px;width:3184px;height:72px;background:#F0F4F9;border-radius:0px;"></div>
<div style="position:absolute;left:260px;top:1698px;width:27px;height:27px;border:2.5px solid #0B2033;border-radius:7px;"></div>
<div class="t" style="top:1697.8px;font-size:31.00px;font-weight:700;color:#0A0A0A;letter-spacing:0.16px;left:342.1px;">Product Name</div>
<div class="t" style="top:1697.5px;font-size:31.28px;font-weight:700;color:#0A0A0A;letter-spacing:0.37px;left:633.1px;">Vendor</div>
<div class="t" style="top:1698.0px;font-size:30.76px;font-weight:700;color:#0A0A0A;letter-spacing:0.02px;left:899.8px;">Sku</div>
<div class="t" style="top:1697.2px;font-size:31.63px;font-weight:700;color:#0A0A0A;letter-spacing:0.57px;left:1077.1px;">Department</div>
<div class="t" style="top:1697.6px;font-size:31.16px;font-weight:700;color:#0A0A0A;letter-spacing:0.26px;left:1339.0px;">Category</div>
<div class="t" style="top:1697.8px;font-size:30.96px;font-weight:700;color:#0A0A0A;letter-spacing:0.13px;left:1553.6px;">Subcategory</div>
<div class="t" style="top:1697.9px;font-size:30.87px;font-weight:700;color:#0A0A0A;letter-spacing:0.09px;left:1842.7px;">Brand</div>
<div class="t" style="top:1698.1px;font-size:30.54px;font-weight:700;color:#0A0A0A;letter-spacing:-0.16px;left:2092.6px;">Pack</div>
<div class="t" style="top:1697.7px;font-size:31.05px;font-weight:700;color:#0A0A0A;letter-spacing:0.19px;left:2291.1px;">Pack Type</div>
<div class="t" style="top:1698.2px;font-size:30.48px;font-weight:700;color:#0A0A0A;letter-spacing:-0.18px;left:2577.1px;">Size</div>
<div class="t" style="top:1697.7px;font-size:31.10px;font-weight:700;color:#0A0A0A;letter-spacing:0.23px;left:2787.9px;">Reports</div>
<div class="t" style="top:1698.0px;font-size:30.72px;font-weight:700;color:#0A0A0A;letter-spacing:-0.01px;left:3030.5px;">Actions</div>
<div class="t" style="top:1697.6px;font-size:31.21px;font-weight:700;color:#0A0A0A;letter-spacing:0.29px;left:3278.6px;">Status</div>
<div style="position:absolute;left:260px;top:1770px;width:27px;height:27px;border:2.5px solid #0B2033;border-radius:7px;"></div>
<div class="t" style="top:1773.6px;font-size:25.32px;font-weight:400;color:#1F2A37;letter-spacing:0.39px;left:348.2px;">Potato Chips</div>
<div class="t" style="top:1755.8px;font-size:25.06px;font-weight:400;color:#1F2A37;letter-spacing:0.27px;left:587.2px;">PrimeSource</div>
<div class="t" style="top:1791.3px;font-size:25.58px;font-weight:400;color:#1F2A37;letter-spacing:0.75px;left:587.2px;">Distributors</div>
<div class="t" style="top:1773.3px;font-size:25.58px;font-weight:400;color:#1F2A37;letter-spacing:1.60px;left:889.3px;">#0001</div>
<div class="t" style="top:1773.3px;font-size:25.58px;font-weight:400;color:#1F2A37;letter-spacing:1.60px;left:1128.8px;">#0001</div>
<div class="t" style="top:1773.7px;font-size:25.12px;font-weight:400;color:#1F2A37;letter-spacing:0.41px;left:1378.2px;">Food</div>
<div class="t" style="top:1773.6px;font-size:25.24px;font-weight:400;color:#1F2A37;letter-spacing:0.42px;left:1614.9px;">Chips</div>
<div class="t" style="top:1773.7px;font-size:25.12px;font-weight:400;color:#1F2A37;letter-spacing:0.38px;left:1860.4px;">Lays</div>
<div class="t" style="top:1773.3px;font-size:25.58px;font-weight:400;color:#1F2A37;letter-spacing:1.84px;left:2112.9px;">12</div>
<div class="t" style="top:1773.3px;font-size:25.58px;font-weight:400;color:#1F2A37;letter-spacing:1.84px;left:2352.4px;">12</div>
<div class="t" style="top:1773.3px;font-size:25.58px;font-weight:400;color:#1F2A37;letter-spacing:0.89px;left:2573.6px;">Small</div>
<div class="t" style="top:1773.3px;font-size:25.58px;font-weight:400;color:#4A86E8;letter-spacing:0.87px;left:2773.6px;">View Report</div>
<svg style="position:absolute;left:3071px;top:1781px;overflow:visible;" width="34" height="10" viewBox="0 0 34 10"><g fill="#111"><circle cx="5" cy="5" r="4.2"/><circle cx="17" cy="5" r="4.2"/><circle cx="29" cy="5" r="4.2"/></g></svg>
<div style="position:absolute;left:3274.6px;top:1760px;width:106.4px;height:52px;background:#3DBE3D;border-radius:26px;"></div>
<div class="t" style="top:1773.4px;font-size:25.54px;font-weight:400;color:#111111;letter-spacing:0.53px;left:3291.7px;">Active</div>
<div style="position:absolute;left:260px;top:1858px;width:27px;height:27px;border:2.5px solid #0B2033;border-radius:7px;"></div>
<div class="t" style="top:1861.6px;font-size:25.29px;font-weight:400;color:#1F2A37;letter-spacing:0.38px;left:344.2px;">CrunchVale Chips</div>
<div class="t" style="top:1843.8px;font-size:25.06px;font-weight:400;color:#1F2A37;letter-spacing:0.27px;left:587.2px;">PrimeSource</div>
<div class="t" style="top:1879.3px;font-size:25.58px;font-weight:400;color:#1F2A37;letter-spacing:0.75px;left:587.2px;">Distributors</div>
<div class="t" style="top:1861.3px;font-size:25.58px;font-weight:400;color:#1F2A37;letter-spacing:1.60px;left:889.3px;">#0001</div>
<div class="t" style="top:1861.3px;font-size:25.58px;font-weight:400;color:#1F2A37;letter-spacing:1.60px;left:1128.8px;">#0001</div>
<div class="t" style="top:1861.7px;font-size:25.12px;font-weight:400;color:#1F2A37;letter-spacing:0.41px;left:1378.2px;">Food</div>
<div class="t" style="top:1861.6px;font-size:25.24px;font-weight:400;color:#1F2A37;letter-spacing:0.42px;left:1614.9px;">Chips</div>
<div class="t" style="top:1861.5px;font-size:25.41px;font-weight:400;color:#1F2A37;letter-spacing:0.48px;left:1819.9px;">CrunchVale</div>
<div class="t" style="top:1861.3px;font-size:25.58px;font-weight:400;color:#1F2A37;letter-spacing:3.04px;left:2112.3px;">24</div>
<div class="t" style="top:1861.3px;font-size:25.58px;font-weight:400;color:#1F2A37;letter-spacing:1.84px;left:2352.4px;">12</div>
<div class="t" style="top:1861.3px;font-size:25.58px;font-weight:400;color:#1F2A37;letter-spacing:0.89px;left:2573.6px;">Small</div>
<div class="t" style="top:1861.3px;font-size:25.58px;font-weight:400;color:#4A86E8;letter-spacing:0.87px;left:2773.6px;">View Report</div>
<svg style="position:absolute;left:3071px;top:1869px;overflow:visible;" width="34" height="10" viewBox="0 0 34 10"><g fill="#111"><circle cx="5" cy="5" r="4.2"/><circle cx="17" cy="5" r="4.2"/><circle cx="29" cy="5" r="4.2"/></g></svg>
<div style="position:absolute;left:3274.6px;top:1848px;width:106.4px;height:52px;background:#3DBE3D;border-radius:26px;"></div>
<div class="t" style="top:1861.4px;font-size:25.54px;font-weight:400;color:#111111;letter-spacing:0.53px;left:3291.7px;">Active</div>
<div style="position:absolute;left:260px;top:1946px;width:27px;height:27px;border:2.5px solid #0B2033;border-radius:7px;"></div>
<div class="t" style="top:1949.5px;font-size:25.44px;font-weight:400;color:#1F2A37;letter-spacing:0.43px;left:344.2px;">SunNest Trail Mix</div>
<div class="t" style="top:1931.8px;font-size:25.06px;font-weight:400;color:#1F2A37;letter-spacing:0.27px;left:587.2px;">PrimeSource</div>
<div class="t" style="top:1967.3px;font-size:25.58px;font-weight:400;color:#1F2A37;letter-spacing:0.75px;left:587.2px;">Distributors</div>
<div class="t" style="top:1949.3px;font-size:25.58px;font-weight:400;color:#1F2A37;letter-spacing:1.60px;left:889.3px;">#0001</div>
<div class="t" style="top:1949.3px;font-size:25.58px;font-weight:400;color:#1F2A37;letter-spacing:1.60px;left:1128.8px;">#0001</div>
<div class="t" style="top:1949.7px;font-size:25.12px;font-weight:400;color:#1F2A37;letter-spacing:0.41px;left:1378.2px;">Food</div>
<div class="t" style="top:1949.6px;font-size:25.24px;font-weight:400;color:#1F2A37;letter-spacing:0.42px;left:1614.9px;">Chips</div>
<div class="t" style="top:1949.6px;font-size:25.30px;font-weight:400;color:#1F2A37;letter-spacing:0.45px;left:1839.8px;">Sunnest</div>
<div class="t" style="top:1949.3px;font-size:25.58px;font-weight:400;color:#1F2A37;letter-spacing:3.04px;left:2112.3px;">24</div>
<div class="t" style="top:1949.3px;font-size:25.58px;font-weight:400;color:#1F2A37;letter-spacing:1.84px;left:2352.4px;">12</div>
<div class="t" style="top:1949.3px;font-size:25.58px;font-weight:400;color:#1F2A37;letter-spacing:0.89px;left:2573.6px;">Small</div>
<div class="t" style="top:1949.3px;font-size:25.58px;font-weight:400;color:#4A86E8;letter-spacing:0.87px;left:2773.6px;">View Report</div>
<svg style="position:absolute;left:3071px;top:1957px;overflow:visible;" width="34" height="10" viewBox="0 0 34 10"><g fill="#111"><circle cx="5" cy="5" r="4.2"/><circle cx="17" cy="5" r="4.2"/><circle cx="29" cy="5" r="4.2"/></g></svg>
<div style="position:absolute;left:3274.6px;top:1936px;width:106.4px;height:52px;background:#3DBE3D;border-radius:26px;"></div>
<div class="t" style="top:1949.4px;font-size:25.54px;font-weight:400;color:#111111;letter-spacing:0.53px;left:3291.7px;">Active</div>
<div style="position:absolute;left:260px;top:2034px;width:27px;height:27px;border:2.5px solid #0B2033;border-radius:7px;"></div>
<div class="t" style="top:2019.4px;font-size:25.55px;font-weight:400;color:#1F2A37;letter-spacing:0.54px;left:348.2px;">NutriPeak</div>
<div class="t" style="top:2055.8px;font-size:25.01px;font-weight:400;color:#1F2A37;letter-spacing:0.22px;left:348.2px;">Protein Cookies</div>
<div class="t" style="top:2037.6px;font-size:25.25px;font-weight:400;color:#1F2A37;letter-spacing:0.39px;left:583.3px;">MapleLane Foods</div>
<div class="t" style="top:2037.3px;font-size:25.58px;font-weight:400;color:#1F2A37;letter-spacing:1.60px;left:889.3px;">#0001</div>
<div class="t" style="top:2037.3px;font-size:25.58px;font-weight:400;color:#1F2A37;letter-spacing:1.60px;left:1128.8px;">#0001</div>
<div class="t" style="top:2037.7px;font-size:25.12px;font-weight:400;color:#1F2A37;letter-spacing:0.41px;left:1378.2px;">Food</div>
<div class="t" style="top:2037.6px;font-size:25.24px;font-weight:400;color:#1F2A37;letter-spacing:0.42px;left:1614.9px;">Chips</div>
<div class="t" style="top:2037.3px;font-size:25.58px;font-weight:400;color:#1F2A37;letter-spacing:0.87px;left:1858.8px;">Nutri</div>
<div class="t" style="top:2037.3px;font-size:25.58px;font-weight:400;color:#1F2A37;letter-spacing:1.84px;left:2112.9px;">12</div>
<div class="t" style="top:2037.3px;font-size:25.58px;font-weight:400;color:#1F2A37;letter-spacing:3.04px;left:2351.8px;">24</div>
<div class="t" style="top:2037.3px;font-size:25.58px;font-weight:400;color:#1F2A37;letter-spacing:0.89px;left:2573.6px;">Small</div>
<div class="t" style="top:2037.3px;font-size:25.58px;font-weight:400;color:#4A86E8;letter-spacing:0.87px;left:2773.6px;">View Report</div>
<svg style="position:absolute;left:3071px;top:2045px;overflow:visible;" width="34" height="10" viewBox="0 0 34 10"><g fill="#111"><circle cx="5" cy="5" r="4.2"/><circle cx="17" cy="5" r="4.2"/><circle cx="29" cy="5" r="4.2"/></g></svg>
<div style="position:absolute;left:3274.6px;top:2024px;width:106.4px;height:52px;background:#3DBE3D;border-radius:26px;"></div>
<div class="t" style="top:2037.4px;font-size:25.54px;font-weight:400;color:#111111;letter-spacing:0.53px;left:3291.7px;">Active</div>
<div style="position:absolute;left:260px;top:2122px;width:27px;height:27px;border:2.5px solid #0B2033;border-radius:7px;"></div>
<div class="t" style="top:2125.6px;font-size:25.28px;font-weight:400;color:#1F2A37;letter-spacing:0.38px;left:344.2px;">BerryRush Cooler</div>
<div class="t" style="top:2125.6px;font-size:25.25px;font-weight:400;color:#1F2A37;letter-spacing:0.39px;left:583.3px;">MapleLane Foods</div>
<div class="t" style="top:2125.3px;font-size:25.58px;font-weight:400;color:#1F2A37;letter-spacing:1.60px;left:889.3px;">#0001</div>
<div class="t" style="top:2125.3px;font-size:25.58px;font-weight:400;color:#1F2A37;letter-spacing:1.60px;left:1128.8px;">#0001</div>
<div class="t" style="top:2125.5px;font-size:25.43px;font-weight:400;color:#1F2A37;letter-spacing:0.49px;left:1370.2px;">Drinks</div>
<div class="t" style="top:2125.7px;font-size:25.13px;font-weight:400;color:#1F2A37;letter-spacing:0.32px;left:1603.8px;">Coolers</div>
<div class="t" style="top:2125.7px;font-size:25.18px;font-weight:400;color:#1F2A37;letter-spacing:0.33px;left:1823.8px;">The Cooler</div>
<div class="t" style="top:2125.3px;font-size:25.58px;font-weight:400;color:#1F2A37;letter-spacing:3.04px;left:2112.3px;">32</div>
<div class="t" style="top:2125.3px;font-size:25.58px;font-weight:400;color:#1F2A37;letter-spacing:1.84px;left:2352.4px;">12</div>
<div class="t" style="top:2126.1px;font-size:24.70px;font-weight:400;color:#1F2A37;letter-spacing:0.10px;left:2584.6px;">Can</div>
<div class="t" style="top:2125.3px;font-size:25.58px;font-weight:400;color:#4A86E8;letter-spacing:0.87px;left:2773.6px;">View Report</div>
<svg style="position:absolute;left:3071px;top:2133px;overflow:visible;" width="34" height="10" viewBox="0 0 34 10"><g fill="#111"><circle cx="5" cy="5" r="4.2"/><circle cx="17" cy="5" r="4.2"/><circle cx="29" cy="5" r="4.2"/></g></svg>
<div style="position:absolute;left:3274.6px;top:2112px;width:106.4px;height:52px;background:#3DBE3D;border-radius:26px;"></div>
<div class="t" style="top:2125.4px;font-size:25.54px;font-weight:400;color:#111111;letter-spacing:0.53px;left:3291.7px;">Active</div>
<div style="position:absolute;left:260px;top:2210px;width:27px;height:27px;border:2.5px solid #0B2033;border-radius:7px;"></div>
<div class="t" style="top:2195.3px;font-size:25.58px;font-weight:400;color:#1F2A37;letter-spacing:0.80px;left:348.2px;">UrbanHarvest</div>
<div class="t" style="top:2231.9px;font-size:24.98px;font-weight:400;color:#1F2A37;letter-spacing:0.23px;left:348.3px;">Crackers</div>
<div class="t" style="top:2213.6px;font-size:25.25px;font-weight:400;color:#1F2A37;letter-spacing:0.39px;left:583.3px;">MapleLane Foods</div>
<div class="t" style="top:2213.3px;font-size:25.58px;font-weight:400;color:#1F2A37;letter-spacing:1.60px;left:889.3px;">#0001</div>
<div class="t" style="top:2213.3px;font-size:25.58px;font-weight:400;color:#1F2A37;letter-spacing:1.60px;left:1128.8px;">#0001</div>
<div class="t" style="top:2213.7px;font-size:25.12px;font-weight:400;color:#1F2A37;letter-spacing:0.41px;left:1378.2px;">Food</div>
<div class="t" style="top:2213.6px;font-size:25.24px;font-weight:400;color:#1F2A37;letter-spacing:0.42px;left:1614.9px;">Chips</div>
<div class="t" style="top:2213.3px;font-size:25.58px;font-weight:400;color:#1F2A37;letter-spacing:0.90px;left:1840.8px;">Harvest</div>
<div class="t" style="top:2213.3px;font-size:25.58px;font-weight:400;color:#1F2A37;letter-spacing:3.04px;left:2112.3px;">24</div>
<div class="t" style="top:2213.3px;font-size:25.58px;font-weight:400;color:#1F2A37;letter-spacing:1.84px;left:2352.4px;">12</div>
<div class="t" style="top:2213.3px;font-size:25.58px;font-weight:400;color:#1F2A37;letter-spacing:0.89px;left:2573.6px;">Small</div>
<div class="t" style="top:2213.3px;font-size:25.58px;font-weight:400;color:#4A86E8;letter-spacing:0.87px;left:2773.6px;">View Report</div>
<svg style="position:absolute;left:3071px;top:2221px;overflow:visible;" width="34" height="10" viewBox="0 0 34 10"><g fill="#111"><circle cx="5" cy="5" r="4.2"/><circle cx="17" cy="5" r="4.2"/><circle cx="29" cy="5" r="4.2"/></g></svg>
<div style="position:absolute;left:3274.6px;top:2200px;width:106.4px;height:52px;background:#3DBE3D;border-radius:26px;"></div>
<div class="t" style="top:2213.4px;font-size:25.54px;font-weight:400;color:#111111;letter-spacing:0.53px;left:3291.7px;">Active</div>
<div style="position:absolute;left:3280px;top:2284px;width:112px;height:112px;border-radius:20px;background:linear-gradient(#B58CFF,#5A2DA8);"></div>
<div style="position:absolute;left:3283px;top:2287px;width:106px;height:106px;background:#FFFFFF;border-radius:17px;"></div>
<svg style="position:absolute;left:3314px;top:2314px;overflow:visible;" width="60" height="62" viewBox="0 0 60 62"><g fill="#8A3FFC"><rect x="4.5" y="5" width="35" height="24" rx="6"/><rect x="20" y="0.5" width="4" height="7" rx="2"/><path d="M6 33 H34 Q37 45 38 52 Q33 55 21 55 Q0 55 0 42 Q0 33 6 33 Z"/></g><g fill="#fff"><circle cx="14.5" cy="16" r="3.4"/><circle cx="28.5" cy="16" r="3.4"/></g><path d="M16.5 23 Q22 25.5 27.5 23" fill="none" stroke="#fff" stroke-width="1.8" stroke-linecap="round"/><path d="M35.5 22.9 Q38.47 33.43 49.0 36.4 Q38.47 39.37 35.5 49.9 Q32.53 39.37 22.0 36.4 Q32.53 33.43 35.5 22.9 Z" fill="#8A3FFC" stroke="#fff" stroke-width="3" stroke-linejoin="round"/><path d="M47.4 46 Q48.8 51.6 54.4 53 Q48.8 54.4 47.4 60 Q46.0 54.4 40.4 53 Q46.0 51.6 47.4 46 Z" fill="#8A3FFC"/></svg>
</div></body></html>
